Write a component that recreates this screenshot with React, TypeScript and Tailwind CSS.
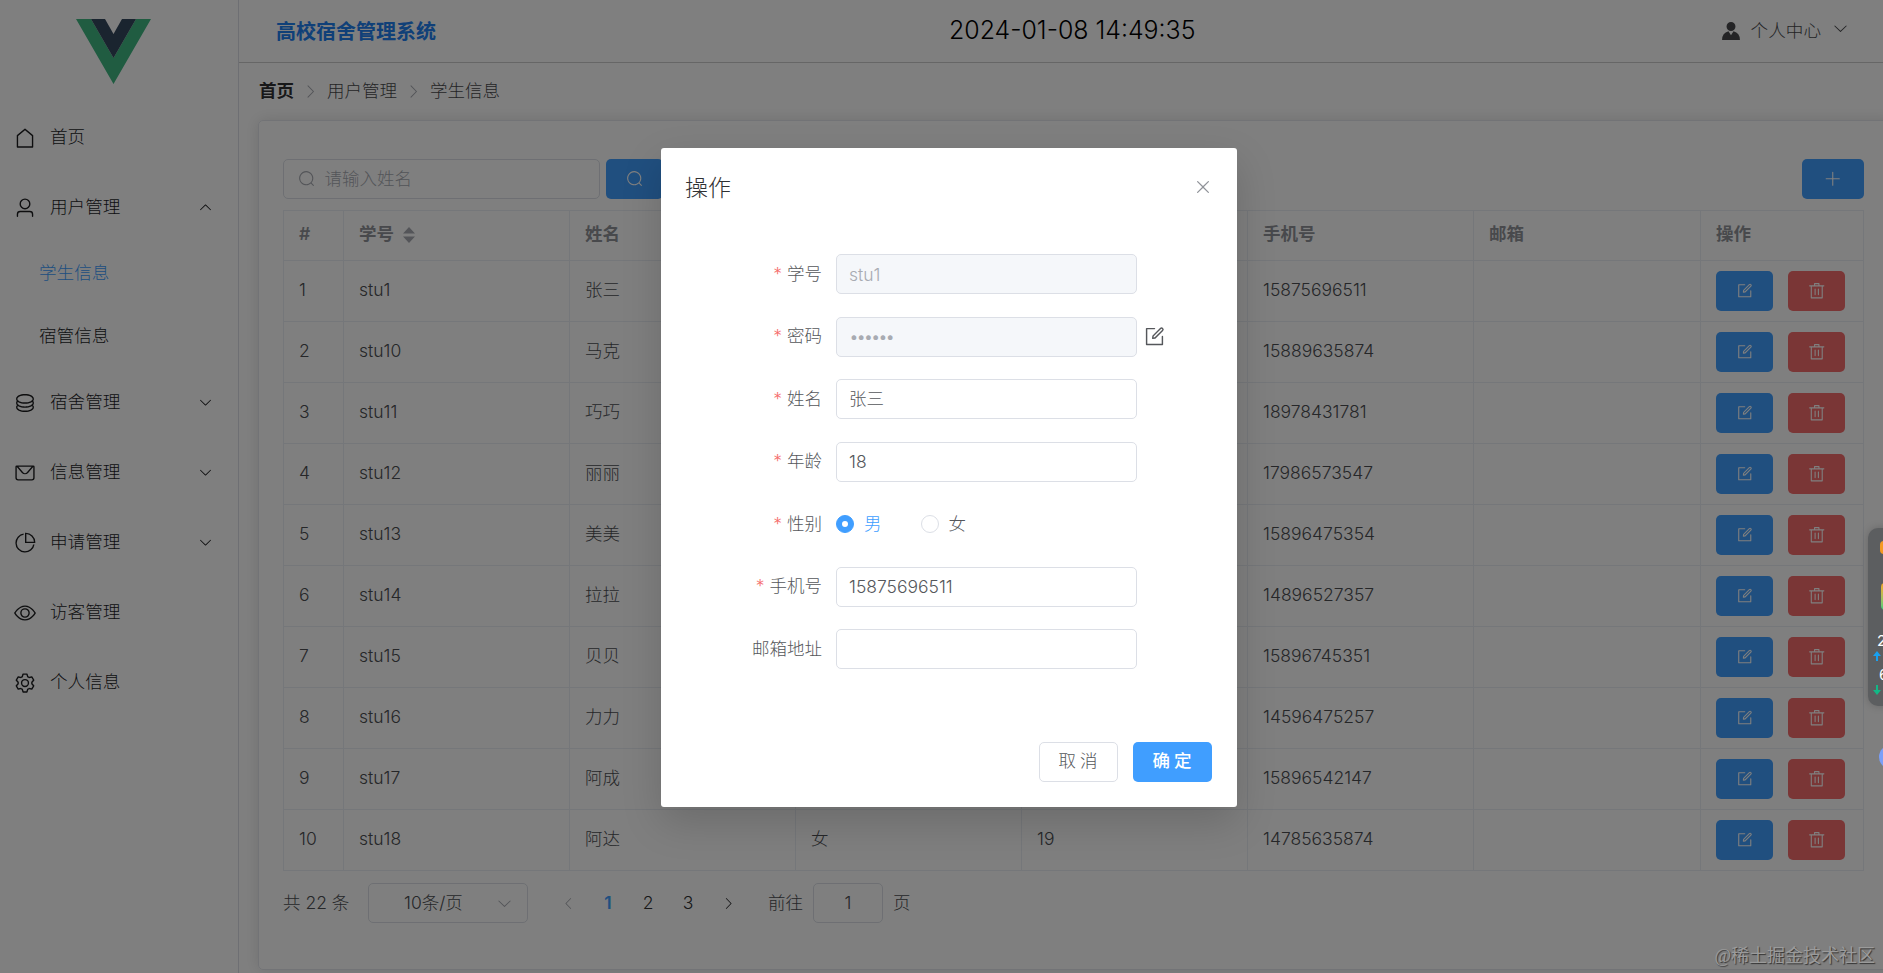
import { useState, type ReactNode } from "react";

const icons = {
  house:
    "M192 413.952V896h640V413.952L512 147.328 192 413.952zM139.52 374.4l352-293.312a32 32 0 0 1 40.96 0l352 293.312A32 32 0 0 1 896 398.976V928a32 32 0 0 1-32 32H160a32 32 0 0 1-32-32V398.976a32 32 0 0 1 11.52-24.576z",
  user: "M512 512a192 192 0 1 0 0-384 192 192 0 0 0 0 384m0 64a256 256 0 1 1 0-512 256 256 0 0 1 0 512m320 320v-96a96 96 0 0 0-96-96H288a96 96 0 0 0-96 96v96a32 32 0 1 1-64 0v-96a160 160 0 0 1 160-160h448a160 160 0 0 1 160 160v96a32 32 0 1 1-64 0",
  coin: "m161.92 580.736 29.888 58.88C171.328 659.776 160 681.728 160 704c0 82.304 155.328 160 352 160s352-77.696 352-160c0-22.272-11.392-44.16-31.808-64.32l30.464-58.432C903.936 615.808 928 657.664 928 704c0 129.728-188.544 224-416 224S96 833.728 96 704c0-46.592 24.32-88.576 65.92-123.264zm0-192 29.888 58.88C171.328 467.84 160 489.792 160 512c0 82.304 155.328 160 352 160s352-77.696 352-160c0-22.272-11.392-44.16-31.808-64.32l30.464-58.432C903.936 423.808 928 465.664 928 512c0 129.728-188.544 224-416 224S96 641.728 96 512c0-46.592 24.32-88.576 65.92-123.264zM512 544c-227.456 0-416-94.272-416-224S284.544 96 512 96s416 94.272 416 224-188.544 224-416 224m0-64c196.672 0 352-77.696 352-160S708.672 160 512 160s-352 77.696-352 160 155.328 160 352 160",
  message:
    "M128 224v512a64 64 0 0 0 64 64h640a64 64 0 0 0 64-64V224zm0-64h768a64 64 0 0 1 64 64v512a128 128 0 0 1-128 128H192A128 128 0 0 1 64 736V224a64 64 0 0 1 64-64M904 224 656.512 506.88a192 192 0 0 1-289.024 0L120 224zm-698.944 0 210.56 240.704a128 128 0 0 0 192.704 0L818.944 224H205.056",
  pie: "M448 68.48v64.832A384.128 384.128 0 0 0 512 896a384.128 384.128 0 0 0 378.688-320h64.768A448.128 448.128 0 0 1 64 512 448.128 448.128 0 0 1 448 68.48zM576 97.28V448h350.72A384.064 384.064 0 0 0 576 97.28zM512 64V33.152A448 448 0 0 1 990.848 512H512z",
  view: "M512 160c320 0 512 352 512 352S832 864 512 864 0 512 0 512s192-352 512-352m0 64c-225.28 0-384.128 208.064-436.8 288 52.608 79.872 211.456 288 436.8 288 225.28 0 384.128-208.064 436.8-288-52.608-79.872-211.456-288-436.8-288m0 64a224 224 0 1 1 0 448 224 224 0 0 1 0-448m0 64a160.192 160.192 0 0 0-160 160c0 88.192 71.744 160 160 160s160-71.808 160-160-71.744-160-160-160",
  setting:
    "M600.704 64a32 32 0 0 1 30.464 22.208l35.2 109.376c14.784 7.232 28.928 15.36 42.432 24.512l112.384-24.192a32 32 0 0 1 34.432 15.36L944.32 364.8a32 32 0 0 1-4.032 37.504l-77.12 85.12a357.12 357.12 0 0 1 0 49.024l77.12 85.248a32 32 0 0 1 4.032 37.504l-88.704 153.6a32 32 0 0 1-34.432 15.296L708.8 803.904c-13.44 9.088-27.648 17.28-42.368 24.512l-35.264 109.376A32 32 0 0 1 600.704 960H423.296a32 32 0 0 1-30.464-22.208L357.696 828.48a351.616 351.616 0 0 1-42.56-24.64l-112.32 24.256a32 32 0 0 1-34.432-15.36L79.68 659.2a32 32 0 0 1 4.032-37.504l77.12-85.248a357.12 357.12 0 0 1 0-48.896l-77.12-85.248A32 32 0 0 1 79.68 364.8l88.704-153.6a32 32 0 0 1 34.432-15.296l112.32 24.256c13.568-9.152 27.776-17.408 42.56-24.64l35.2-109.312A32 32 0 0 1 423.232 64H600.64zm-23.424 64H446.72l-36.352 113.088-24.512 11.968a294.113 294.113 0 0 0-34.816 20.096l-22.656 15.36-116.224-25.088-65.28 113.152 79.68 88.192-1.92 27.136a293.12 293.12 0 0 0 0 40.192l1.92 27.136-79.808 88.192 65.344 113.152 116.224-25.024 22.656 15.296a294.113 294.113 0 0 0 34.816 20.096l24.512 11.968L446.72 896h130.688l36.48-113.152 24.448-11.904a288.282 288.282 0 0 0 34.752-20.096l22.592-15.296 116.288 25.024 65.28-113.152-79.744-88.192 1.92-27.136a293.12 293.12 0 0 0 0-40.256l-1.92-27.136 79.808-88.128-65.344-113.152-116.288 24.96-22.592-15.232a287.616 287.616 0 0 0-34.752-20.096l-24.448-11.904L577.344 128zM512 320a192 192 0 1 1 0 384 192 192 0 0 1 0-384m0 64a128 128 0 1 0 0 256 128 128 0 0 0 0-256",
  arrow:
    "M831.872 340.864 512 652.672 192.128 340.864a30.592 30.592 0 0 0-42.752 0 29.12 29.12 0 0 0 0 41.6L489.664 714.24a32 32 0 0 0 44.672 0l340.288-331.712a29.12 29.12 0 0 0 0-41.728 30.592 30.592 0 0 0-42.752 0z",
  search:
    "m795.904 750.72 124.992 124.928a32 32 0 0 1-45.248 45.248L750.656 795.904a416 416 0 1 1 45.248-45.248zM480 832a352 352 0 1 0 0-704 352 352 0 0 0 0 704",
  plus: "M480 480V128a32 32 0 0 1 64 0v352h352a32 32 0 1 1 0 64H544v352a32 32 0 1 1-64 0V544H128a32 32 0 0 1 0-64z",
  close:
    "M764.288 214.592 512 466.88 259.712 214.592a31.936 31.936 0 0 0-45.12 45.12L466.752 512 214.528 764.224a31.936 31.936 0 1 0 45.12 45.184L512 557.184l252.288 252.288a31.936 31.936 0 0 0 45.12-45.12L557.12 512.064l252.288-252.352a31.936 31.936 0 1 0-45.12-45.184z",
  edit: "M832 512a32 32 0 1 1 64 0v352a32 32 0 0 1-32 32H160a32 32 0 0 1-32-32V160a32 32 0 0 1 32-32h352a32 32 0 0 1 0 64H192v640h640zm-362.048 42.24 52.8-7.552L847.104 222.4a32 32 0 1 0-45.248-45.248L477.44 501.44l-7.552 52.8zm422.4-422.4a96 96 0 0 1 0 135.808l-331.84 331.84a32 32 0 0 1-18.112 9.088L436.8 623.68a32 32 0 0 1-36.224-36.224l15.104-105.6a32 32 0 0 1 9.024-18.112l331.904-331.84a96 96 0 0 1 135.744 0",
  trash:
    "M160 256H96a32 32 0 0 1 0-64h256V95.936a32 32 0 0 1 32-32h256a32 32 0 0 1 32 32V192h256a32 32 0 1 1 0 64h-64v672a32 32 0 0 1-32 32H192a32 32 0 0 1-32-32zm448-64v-64H416v64zM224 896h576V256H224zm192-128a32 32 0 0 1-32-32V416a32 32 0 0 1 64 0v320a32 32 0 0 1-32 32m192 0a32 32 0 0 1-32-32V416a32 32 0 0 1 64 0v320a32 32 0 0 1-32 32",
  avatar:
    "M628.736 528.896A416 416 0 0 1 928 928H96a415.872 415.872 0 0 1 299.264-399.104L512 704zM720 304a208 208 0 1 1-416 0 208 208 0 0 1 416 0",
};

type IconName = keyof typeof icons;

function Icon({ name, className = "" }: { name: IconName; className?: string }) {
  return (
    <svg viewBox="0 0 1024 1024" fill="currentColor" className={`shrink-0 ${className}`}>
      <path d={icons[name]} />
    </svg>
  );
}

const menu: { label: string; icon: IconName; arrow?: boolean; children?: string[] }[] = [
  { label: "首页", icon: "house" },
  { label: "用户管理", icon: "user", arrow: true, children: ["学生信息", "宿管信息"] },
  { label: "宿舍管理", icon: "coin", arrow: true },
  { label: "信息管理", icon: "message", arrow: true },
  { label: "申请管理", icon: "pie", arrow: true },
  { label: "访客管理", icon: "view" },
  { label: "个人信息", icon: "setting" },
];

type Student = { id: string; name: string; phone: string; gender?: string; age?: string };

const students: Student[] = [
  { id: "stu1", name: "张三", phone: "15875696511" },
  { id: "stu10", name: "马克", phone: "15889635874" },
  { id: "stu11", name: "巧巧", phone: "18978431781" },
  { id: "stu12", name: "丽丽", phone: "17986573547" },
  { id: "stu13", name: "美美", phone: "15896475354" },
  { id: "stu14", name: "拉拉", phone: "14896527357" },
  { id: "stu15", name: "贝贝", phone: "15896745351" },
  { id: "stu16", name: "力力", phone: "14596475257" },
  { id: "stu17", name: "阿成", phone: "15896542147" },
  { id: "stu18", name: "阿达", phone: "14785635874", gender: "女", age: "19" },
];

const columns = ["#", "学号", "姓名", "性别", "年龄", "手机号", "邮箱", "操作"];

function Sidebar() {
  return (
    <aside className="w-[239px] shrink-0 border-r border-[#dcdfe6]">
      <div className="flex h-[103px] justify-center pt-[19px] pr-[11px]">
        <svg viewBox="0 0 75 65" className="h-[65px] w-[75px]">
          <path d="M0 0h15l22.5 39L60 0h15L37.5 65z" fill="#41b883" />
          <path d="M15 0h14l8.5 15L46 0h14L37.5 39z" fill="#35495e" />
        </svg>
      </div>
      <nav className="text-[17.6px] text-[#1c1d1f]">
        {menu.map((item) => (
          <div key={item.label}>
            <div className="flex h-[70px] items-center pr-[25px] pb-px pl-[14px]">
              <Icon name={item.icon} className="mr-[14px] size-[22px]" />
              <span>{item.label}</span>
              {item.arrow && (
                <Icon
                  name="arrow"
                  className={`ml-auto size-[15px] ${item.children ? "rotate-180" : ""}`}
                />
              )}
            </div>
            {item.children?.map((child, i) => (
              <div
                key={child}
                className={`flex h-[62.5px] items-center pb-[2px] pl-[39px] ${i === 0 ? "text-[#409eff]" : ""}`}
              >
                {child}
              </div>
            ))}
          </div>
        ))}
      </nav>
    </aside>
  );
}

function TopBar() {
  return (
    <header className="flex h-[63px] items-center border-b border-[#ccc] pr-[34px] pl-[37px]">
      <h1 className="w-[673px] pt-[2px] text-[20px] font-bold text-[#2080f0]">
        高校宿舍管理系统
      </h1>
      <time className="text-[24.9px] text-black">2024-01-08 14:49:35</time>
      <div className="ml-auto flex items-center pt-px text-[17.6px] text-[#48494c]">
        <Icon name="avatar" className="mr-[9px] size-[22px]" />
        <span>个人中心</span>
        <Icon name="arrow" className="mb-[6px] ml-[11px] size-[17px]" />
      </div>
    </header>
  );
}

function StudentTable() {
  return (
    <table className="mt-[11px] w-[1581px] table-fixed border-collapse border border-[#ebeef5] text-left text-[17.5px] text-[#4c4e52]">
      <colgroup>
        <col className="w-[60px]" />
        <col className="w-[226px]" />
        <col className="w-[226px]" />
        <col className="w-[226px]" />
        <col className="w-[226px]" />
        <col className="w-[226px]" />
        <col className="w-[227px]" />
        <col />
      </colgroup>
      <thead>
        <tr className="h-[50px] text-[#909399]">
          {columns.map((c) => (
            <th key={c} className="border border-[#ebeef5] px-[15px] pt-0 pb-[2px] font-semibold">
              <span className="inline-flex items-center">
                {c}
                {c === "学号" && (
                  <svg viewBox="0 0 12 16" className="ml-[9px] h-[16px] w-[12px]" fill="#a8abb2">
                    <path d="M0 6.5h12L6 0zM0 9.5h12L6 16z" />
                  </svg>
                )}
              </span>
            </th>
          ))}
        </tr>
      </thead>
      <tbody>
        {students.map((s, i) => (
          <tr key={s.id} className="h-[61px]">
            {[i + 1, s.id, s.name, s.gender, s.age, s.phone, ""].map((v, j) => (
              <td key={j} className="border border-[#ebeef5] px-[15px] pt-0 pb-[2px]">
                {v}
              </td>
            ))}
            <td className="border border-[#ebeef5] px-[15px] py-0">
              <div className="flex gap-[15px]">
                <button className="flex h-10 w-[57px] items-center justify-center rounded-[5px] bg-[#409eff] text-white">
                  <Icon name="edit" className="size-[17.5px]" />
                </button>
                <button className="flex h-10 w-[57px] items-center justify-center rounded-[5px] bg-[#f56c6c] text-white">
                  <Icon name="trash" className="size-[17.5px]" />
                </button>
              </div>
            </td>
          </tr>
        ))}
      </tbody>
    </table>
  );
}

function Pagination() {
  return (
    <div className="mt-[12px] flex h-10 items-center text-[17.5px] text-[#4c4e52]">
      <span className="w-[85px] whitespace-nowrap">共 22 条</span>
      <div className="flex h-10 w-[160px] items-center rounded-[5px] border border-[#dcdfe6] pr-[14px] pl-[35px]">
        10条/页
        <Icon name="arrow" className="ml-auto size-[17px] text-[#a8abb2]" />
      </div>
      <div className="ml-5 flex text-[#303133]">
        <span className="flex w-10 items-center justify-center text-[#a8abb2]">
          <Icon name="arrow" className="size-[15px] rotate-90" />
        </span>
        <span className="w-10 text-center font-semibold text-[#409eff]">1</span>
        <span className="w-10 text-center">2</span>
        <span className="w-10 text-center">3</span>
        <span className="flex w-10 items-center justify-center">
          <Icon name="arrow" className="size-[15px] -rotate-90" />
        </span>
      </div>
      <span className="ml-5">前往</span>
      <div className="mr-[10px] ml-[10px] flex h-10 w-[70px] items-center justify-center rounded-[5px] border border-[#dcdfe6]">
        1
      </div>
      <span>页</span>
    </div>
  );
}

function Field({
  label,
  required = true,
  children,
}: {
  label: string;
  required?: boolean;
  children: ReactNode;
}) {
  return (
    <div className="flex h-10 items-center">
      <label className="w-[150px] pr-[14px] text-right">
        {required && <span className="mr-[5px] text-[#f56c6c]">*</span>}
        {label}
      </label>
      {children}
    </div>
  );
}

const inputClass = "h-10 w-[301px] rounded-[5px] border border-[#dcdfe6] px-[12px] outline-none";
const disabledClass = "bg-[#f5f7fa] text-[#a8abb2]";

function EditDialog() {
  const [gender, setGender] = useState("男");

  return (
    <div className="flex h-[659px] w-[576px] flex-col rounded-[3px] bg-white p-[25px] text-[17.5px] text-[#55575b] shadow-[0_15px_40px_rgba(0,0,0,0.16)]">
      <div className="-mr-px flex h-[30px] items-center justify-between">
        <h2 className="-ml-px text-[23px] text-[#303133]">操作</h2>
        <Icon name="close" className="mb-[2px] size-5 text-[#909399]" />
      </div>
      <div className="mt-[51px] flex flex-col gap-[22.5px]">
        <Field label="学号">
          <input className={`${inputClass} ${disabledClass}`} value="stu1" disabled />
        </Field>
        <Field label="密码">
          <input
            type="password"
            className={`${inputClass} ${disabledClass} tracking-[-2.6px]`}
            value="123456"
            disabled
          />
          <Icon name="edit" className="ml-[6px] size-[23px]" />
        </Field>
        <Field label="姓名">
          <input className={`${inputClass} pb-[3px]`} defaultValue="张三" />
        </Field>
        <Field label="年龄">
          <input className={inputClass} defaultValue="18" />
        </Field>
        <Field label="性别">
          {["男", "女"].map((g) => (
            <button
              key={g}
              onClick={() => setGender(g)}
              className={`mr-[39px] flex items-center gap-[10px] ${g === gender ? "text-[#409eff]" : ""}`}
            >
              <span
                className={`flex size-[18px] items-center justify-center rounded-full border ${
                  g === gender ? "border-[#409eff] bg-[#409eff]" : "border-[#dcdfe6]"
                }`}
              >
                {g === gender && <span className="size-[6px] rounded-full bg-white" />}
              </span>
              {g}
            </button>
          ))}
        </Field>
        <Field label="手机号">
          <input className={inputClass} defaultValue="15875696511" />
        </Field>
        <Field label="邮箱地址" required={false}>
          <input className={inputClass} />
        </Field>
      </div>
      <div className="mt-auto flex justify-end gap-[15px]">
        <button className="h-10 w-[79px] rounded-[5px] border border-[#dcdfe6] pb-[2px] pl-[3px] tracking-[4px]">
          取消
        </button>
        <button className="h-10 w-[79px] rounded-[5px] bg-[#409eff] pb-[2px] pl-[3px] font-medium tracking-[4px] text-white">
          确定
        </button>
      </div>
    </div>
  );
}

export default function App() {
  return (
    <div className="relative h-[973px] w-[1883px] overflow-hidden bg-white font-['Inter','Noto_Sans_CJK_SC',sans-serif] font-light">
      <div className="flex h-full">
        <Sidebar />
        <main className="min-w-0 flex-1">
          <TopBar />
          <div className="flex h-[57px] items-center gap-2 pl-5 text-[17.5px] text-[#48494c]">
            <span className="font-bold text-[#303133]">首页</span>
            <Icon name="arrow" className="size-[17px] -rotate-90 text-[#a8abb2]" />
            <span>用户管理</span>
            <Icon name="arrow" className="size-[17px] -rotate-90 text-[#a8abb2]" />
            <span>学生信息</span>
          </div>
          <section className="ml-[19px] h-[850px] w-[1640px] rounded-[5px] border border-[#e4e7ed] p-6 pt-[38px] shadow-[0_0_15px_rgba(0,0,0,0.12)]">
            <div className="flex w-[1581px] items-center">
              <div className="flex h-10 w-[317px] items-center rounded-[5px] border border-[#dcdfe6] pl-[14px] text-[17.5px] text-[#a8abb2]">
                <Icon name="search" className="mr-[9px] size-[17.5px]" />
                请输入姓名
              </div>
              <button className="ml-[6px] flex h-10 w-[57px] items-center justify-center rounded-[5px] bg-[#409eff] text-white">
                <Icon name="search" className="size-[17.5px]" />
              </button>
              <button className="ml-auto flex h-10 w-[62px] items-center justify-center rounded-[5px] bg-[#409eff] text-white">
                <Icon name="plus" className="size-[17.5px]" />
              </button>
            </div>
            <StudentTable />
            <Pagination />
          </section>
        </main>
      </div>

      <div className="absolute inset-0 flex items-start bg-black/50 pt-[148px] pl-[661px]">
        <EditDialog />
      </div>

      {/* Network monitor docked to the right edge */}
      <div className="absolute top-[528px] -right-5 h-[178px] w-[35px] rounded-[10px] bg-[#5c5e60] pl-[5px] text-[15px] font-normal text-white shadow-[0_0_8px_rgba(0,0,0,0.2)]">
        <div className="mt-[13px] ml-[7px] h-[13px] w-4 rounded-[4px] bg-[#f59a23]" />
        <div className="mt-[29px] ml-[8px] h-[27px] w-4 rounded-[4px] bg-gradient-to-b from-[#f5a623] to-[#2fd07a]" />
        <div className="mt-[21px] ml-[4px] leading-[20px]">2</div>
        <svg viewBox="0 0 8 10" className="h-[10px] w-[8px]" fill="#18a0f0">
          <path d="M4 0l4 5H5v5H3V5H0z" />
        </svg>
        <div className="mt-[4px] ml-[6px] leading-[20px]">6</div>
        <svg viewBox="0 0 8 10" className="h-[10px] w-[8px]" fill="#12b886">
          <path d="M4 10l4-5H5V0H3v5H0z" />
        </svg>
      </div>
      <div className="absolute top-[745px] -right-5 size-6 rounded-full bg-[#7b9ff8]" />
      <div className="absolute right-2 bottom-[3px] font-['Liberation_Serif','Noto_Sans_CJK_SC',sans-serif] text-[18px] font-normal text-[#9b9b9b] [text-shadow:1px_1px_1px_#333]">
        @稀土掘金技术社区
      </div>
    </div>
  );
}
